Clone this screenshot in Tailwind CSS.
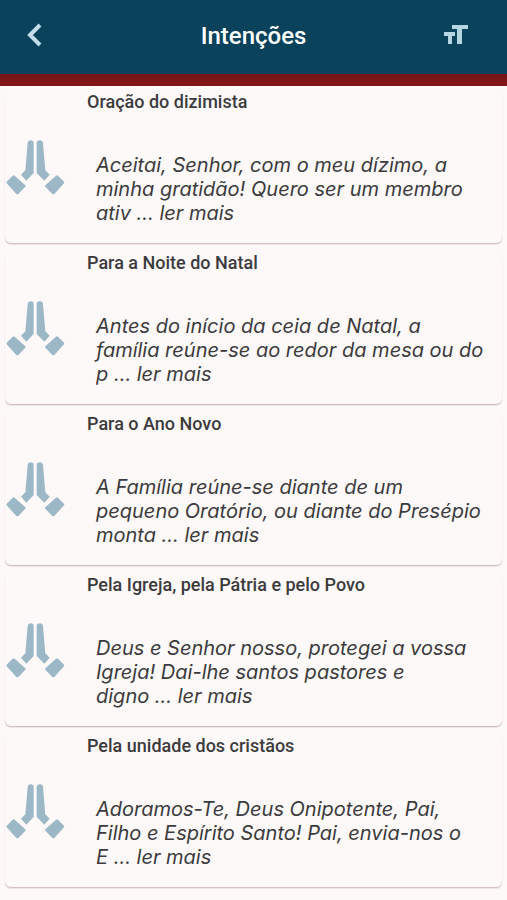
<!DOCTYPE html>
<html lang="pt">
<head>
<meta charset="utf-8">
<meta name="viewport" content="width=device-width, initial-scale=1">
<title>Intenções</title>
<script src="https://cdn.jsdelivr.net/npm/@tailwindcss/browser@4"></script>
</head>
<body class="bg-[#fef9f9] text-[#3b3b3d]">
<svg class="hidden" aria-hidden="true">
  <symbol id="hands" viewBox="15 50 180 180">
    <path d="M83 68Q84 60 92 60Q101 60 101 68V158L79 181L63 163L76 150Z"/>
    <path d="M129 68Q128 60 120 60Q110 60 110 68V158L133 181L149 163L136 150Z"/>
    <path d="M38 166Q41 163 44 166L76 195Q78 197 76 199L55 221Q52 223 49 221L20 189Q18 186 20 184Z"/>
    <path d="M174 166Q171 163 168 166L136 195Q134 197 136 199L157 221Q160 223 163 221L192 189Q194 186 192 184Z"/>
  </symbol>
</svg>
<header class="grid h-[74px] grid-cols-[1fr_auto_1fr] items-center bg-[#0a425c] px-5 pb-[2px] font-[Roboto,sans-serif]">
  <button type="button" aria-label="Voltar" class="flex size-8 items-center justify-center">
    <svg class="size-8" viewBox="0 0 32 32" fill="none" stroke="#c3dcec" stroke-width="4"><path d="M20 5L10 15L20 25"/></svg>
  </button>
  <h1 class="text-2xl font-medium text-white">Intenções</h1>
  <button type="button" aria-label="Tamanho do texto" class="mr-[15px] flex size-8 items-center justify-center justify-self-end">
    <svg class="size-8" viewBox="0 0 32 32" fill="#b5d5e3"><path d="M12 5H28V9H22V24H17V9H12ZM4 12H15V16H12V24H8V16H4Z"/></svg>
  </button>
</header>
<div class="h-3 bg-linear-to-b from-[#6e1518] via-[#7f1719] to-[#83171a]"></div>
<main class="flex flex-col gap-2 px-[5px] pt-1 pb-3 font-[Roboto,sans-serif]">
  <article class="flex h-[153px] items-center rounded-md bg-[#fef9f9] shadow-[0_1px_1px_#d2b9bf,0_2px_1px_#f0e9ea]">
    <svg class="size-[60px] shrink-0 fill-[#9cb8c7]" aria-hidden="true"><use href="#hands"/></svg>
    <div class="flex flex-col gap-[41px] self-stretch pt-[2px] pl-[22px]">
      <h2 class="text-lg leading-5 font-medium">Oração do dizimista</h2>
      <p class="pl-[9px] font-[Inter,sans-serif] text-xl leading-6 whitespace-nowrap italic">Aceitai, Senhor, com o meu dízimo, a<br>minha gratidão! Quero ser um membro<br>ativ ... <a href="#">ler mais</a></p>
    </div>
  </article>
  <article class="flex h-[153px] items-center rounded-md bg-[#fef9f9] shadow-[0_1px_1px_#d2b9bf,0_2px_1px_#f0e9ea]">
    <svg class="size-[60px] shrink-0 fill-[#9cb8c7]" aria-hidden="true"><use href="#hands"/></svg>
    <div class="flex flex-col gap-[41px] self-stretch pt-[2px] pl-[22px]">
      <h2 class="text-lg leading-5 font-medium">Para a Noite do Natal</h2>
      <p class="pl-[9px] font-[Inter,sans-serif] text-xl leading-6 whitespace-nowrap italic">Antes do início da ceia de Natal, a<br>família reúne-se ao redor da mesa ou do<br>p ... <a href="#">ler mais</a></p>
    </div>
  </article>
  <article class="flex h-[153px] items-center rounded-md bg-[#fef9f9] shadow-[0_1px_1px_#d2b9bf,0_2px_1px_#f0e9ea]">
    <svg class="size-[60px] shrink-0 fill-[#9cb8c7]" aria-hidden="true"><use href="#hands"/></svg>
    <div class="flex flex-col gap-[41px] self-stretch pt-[2px] pl-[22px]">
      <h2 class="text-lg leading-5 font-medium">Para o Ano Novo</h2>
      <p class="pl-[9px] font-[Inter,sans-serif] text-xl leading-6 whitespace-nowrap italic">A Família reúne-se diante de um<br>pequeno Oratório, ou diante do Presépio<br>monta ... <a href="#">ler mais</a></p>
    </div>
  </article>
  <article class="flex h-[153px] items-center rounded-md bg-[#fef9f9] shadow-[0_1px_1px_#d2b9bf,0_2px_1px_#f0e9ea]">
    <svg class="size-[60px] shrink-0 fill-[#9cb8c7]" aria-hidden="true"><use href="#hands"/></svg>
    <div class="flex flex-col gap-[41px] self-stretch pt-[2px] pl-[22px]">
      <h2 class="text-lg leading-5 font-medium">Pela Igreja, pela Pátria e pelo Povo</h2>
      <p class="pl-[9px] font-[Inter,sans-serif] text-xl leading-6 whitespace-nowrap italic">Deus e Senhor nosso, protegei a vossa<br>Igreja! Dai-lhe santos pastores e<br>digno ... <a href="#">ler mais</a></p>
    </div>
  </article>
  <article class="flex h-[153px] items-center rounded-md bg-[#fef9f9] shadow-[0_1px_1px_#d2b9bf,0_2px_1px_#f0e9ea]">
    <svg class="size-[60px] shrink-0 fill-[#9cb8c7]" aria-hidden="true"><use href="#hands"/></svg>
    <div class="flex flex-col gap-[41px] self-stretch pt-[2px] pl-[22px]">
      <h2 class="text-lg leading-5 font-medium">Pela unidade dos cristãos</h2>
      <p class="pl-[9px] font-[Inter,sans-serif] text-xl leading-6 whitespace-nowrap italic">Adoramos-Te, Deus Onipotente, Pai,<br>Filho e Espírito Santo! Pai, envia-nos o<br>E ... <a href="#">ler mais</a></p>
    </div>
  </article>
</main>
</body>
</html>
